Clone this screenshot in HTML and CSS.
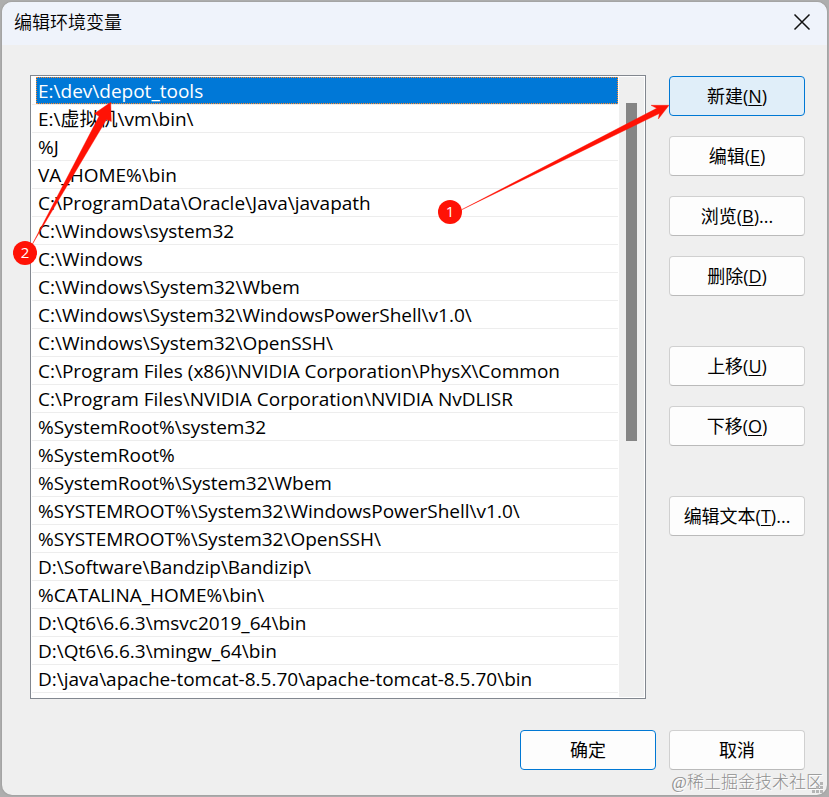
FILE: index.html
```html
<!DOCTYPE html>
<html lang="zh-CN">
<head>
<meta charset="utf-8">
<meta name="viewport" content="width=device-width, initial-scale=1">
<title>编辑环境变量</title>
<link rel="stylesheet" href="styles.css">
</head>
<body>
<main class="dialog">
  <header class="titlebar">
    <h1 class="title">编辑环境变量</h1>
    <button class="close" type="button" aria-label="关闭">
      <svg width="18" height="18" viewBox="0 0 18 18" fill="none" stroke="#111" stroke-width="1.5"><path d="M1.500 1.500l15 15M16.500 1.500l-15 15"/></svg>
    </button>
  </header>
  <div class="content">
    <div class="listbox">
      <ul class="paths" role="listbox" aria-label="环境变量">
        <li class="path" role="option" aria-selected="true"><span class="value">E:\dev\depot_tools</span></li>
        <li class="path" role="option"><span class="value">E:\虚拟机\vm\bin\</span></li>
        <li class="path" role="option"><span class="value">%J</span></li>
        <li class="path" role="option"><span class="value">VA_HOME%\bin</span></li>
        <li class="path" role="option"><span class="value">C:\ProgramData\Oracle\Java\javapath</span></li>
        <li class="path" role="option"><span class="value">C:\Windows\system32</span></li>
        <li class="path" role="option"><span class="value">C:\Windows</span></li>
        <li class="path" role="option"><span class="value">C:\Windows\System32\Wbem</span></li>
        <li class="path" role="option"><span class="value">C:\Windows\System32\WindowsPowerShell\v1.0\</span></li>
        <li class="path" role="option"><span class="value">C:\Windows\System32\OpenSSH\</span></li>
        <li class="path" role="option"><span class="value">C:\Program Files (x86)\NVIDIA Corporation\PhysX\Common</span></li>
        <li class="path" role="option"><span class="value">C:\Program Files\NVIDIA Corporation\NVIDIA NvDLISR</span></li>
        <li class="path" role="option"><span class="value">%SystemRoot%\system32</span></li>
        <li class="path" role="option"><span class="value">%SystemRoot%</span></li>
        <li class="path" role="option"><span class="value">%SystemRoot%\System32\Wbem</span></li>
        <li class="path" role="option"><span class="value">%SYSTEMROOT%\System32\WindowsPowerShell\v1.0\</span></li>
        <li class="path" role="option"><span class="value">%SYSTEMROOT%\System32\OpenSSH\</span></li>
        <li class="path" role="option"><span class="value">D:\Software\Bandzip\Bandizip\</span></li>
        <li class="path" role="option"><span class="value">%CATALINA_HOME%\bin\</span></li>
        <li class="path" role="option"><span class="value">D:\Qt6\6.6.3\msvc2019_64\bin</span></li>
        <li class="path" role="option"><span class="value">D:\Qt6\6.6.3\mingw_64\bin</span></li>
        <li class="path" role="option"><span class="value">D:\java\apache-tomcat-8.5.70\apache-tomcat-8.5.70\bin</span></li>
      </ul>
      <div class="scrollbar"><div class="thumb"></div></div>
      <svg class="callout callout-select" width="102" height="168" viewBox="0 0 102 168" aria-hidden="true">
        <path fill="#ff1205" stroke="#ff1205" stroke-width=".4" d="M20.300 146.300L87 18.300L82.500 15.500L98.700 4.300L99.300 23.500L94.500 21.500Z"/>
        <circle cx="13" cy="155" r="12" fill="#ff1205"/>
        <text class="number" x="13" y="160">2</text>
      </svg>
    </div>
    <div class="actions">
      <div class="group">
        <div class="anchor">
          <button class="button hot" type="button">新建(<u>N</u>)</button>
          <svg class="callout callout-new" width="232" height="122" viewBox="0 0 232 122" aria-hidden="true">
            <path fill="#ff1205" stroke="#ff1205" stroke-width=".4" d="M24.700 105.700L219.700 4.300L214 1.300H232L221.300 15L222.300 9.500Z"/>
            <circle cx="13" cy="108" r="12" fill="#ff1205"/>
            <text class="number" x="13" y="113">1</text>
          </svg>
        </div>
        <button class="button" type="button">编辑(<u>E</u>)</button>
        <button class="button" type="button">浏览(<u>B</u>)...</button>
        <button class="button" type="button">删除(<u>D</u>)</button>
      </div>
      <div class="group">
        <button class="button" type="button">上移(<u>U</u>)</button>
        <button class="button" type="button">下移(<u>O</u>)</button>
      </div>
      <div class="group">
        <button class="button" type="button">编辑文本(<u>T</u>)...</button>
      </div>
    </div>
  </div>
  <footer class="footer">
    <button class="button default" type="button">确定</button>
    <button class="button" type="button">取消</button>
  </footer>
  <div class="watermark">@稀土掘金技术社区</div>
  <svg class="grip" width="12" height="12" viewBox="0 0 12 12" fill="#b5b5b5" aria-hidden="true"><path d="M8 0h3v3h-3zM4 4h3v3h-3zM8 4h3v3h-3zM0 8h3v3h-3zM4 8h3v3h-3zM8 8h3v3h-3z"/></svg>
</main>
</body>
</html>
```
FILE: styles.css
```css
* {
  box-sizing: border-box;
}

body {
  margin: 0;
  padding: 2px;
  min-height: 100vh;
  display: flex;
  background: #aeaeae;
  color: #000;
  font-family: "Open Sans", "Noto Sans CJK SC", sans-serif;
  font-size: 18px;
}

.dialog {
  position: relative;
  flex: 1;
  min-width: 0;
  display: flex;
  flex-direction: column;
  border-radius: 10px;
  background: #efefef;
  box-shadow: 0 0 2px #888;
}

.titlebar {
  display: flex;
  align-items: center;
  justify-content: space-between;
  height: 43px;
  padding: 0 16px 3px 12px;
  border-radius: 10px 10px 0 0;
  background: #eff3fb;
}

.title {
  margin: 0;
  font-size: 18px;
  font-weight: 350;
  line-height: 24px;
}

.close {
  display: flex;
  padding: 0;
  border: 0;
  background: none;
}

.content {
  display: flex;
  gap: 23px;
  padding: 30px 22px 0 28px;
}

.listbox {
  position: relative;
  flex: 1;
  min-width: 0;
  display: flex;
  padding: 1px;
  border: 1px solid #82878f;
  background: #fff;
}

.paths {
  flex: 1;
  min-width: 0;
  margin: 0;
  padding: 0 0 4px;
  font-size: 19px;
  list-style: none;
}

.path {
  height: 28px;
  padding-left: 4px;
  border-bottom: 1px solid #ededed;
  line-height: 28px;
}

.value {
  display: block;
  height: 27px;
  padding-left: 2px;
  white-space: pre;
}

.path[aria-selected="true"] .value {
  background: #0078d7;
  color: #fff;
  outline: 1px dotted #ff8728;
  outline-offset: -1px;
}

.scrollbar {
  width: 25px;
  margin-left: 1px;
  padding: 26px 7px 0;
  background: #efefef;
}

.thumb {
  height: 338px;
  background: #858585;
}

.actions {
  display: flex;
  flex-direction: column;
  gap: 50px;
  padding-top: 1px;
}

.group {
  display: flex;
  flex-direction: column;
  gap: 20px;
}

.anchor {
  position: relative;
  display: flex;
}

.button {
  width: 136px;
  height: 40px;
  padding: 0 0 2px;
  border: 1px solid #d0d0d0;
  border-bottom-color: #bababa;
  border-radius: 4px;
  background: #fdfdfd;
  color: #000;
  font: inherit;
}

.button u {
  text-decoration-thickness: 1px;
  text-underline-offset: 2px;
}

.button.hot {
  border-color: #0078d4;
  background: #e0eef9;
}

.button.default {
  border-color: #0078d4;
}

.footer {
  display: flex;
  justify-content: flex-end;
  gap: 13px;
  padding: 31px 22px 25px;
}

.callout {
  position: absolute;
  pointer-events: none;
}

.callout-select {
  left: -19px;
  top: 22px;
}

.callout-new {
  right: 100%;
  top: 28px;
}

.number {
  fill: #fff;
  font-size: 15px;
  text-anchor: middle;
}

.watermark {
  position: absolute;
  right: 4px;
  bottom: 0;
  color: #8f8f8f;
  font-family: "Liberation Serif", "Noto Sans CJK SC", serif;
  font-size: 17px;
  font-weight: 300;
  line-height: 25px;
  text-shadow: 1px 1px #fff;
}

.grip {
  position: absolute;
  right: 3px;
  bottom: 1px;
}
```
